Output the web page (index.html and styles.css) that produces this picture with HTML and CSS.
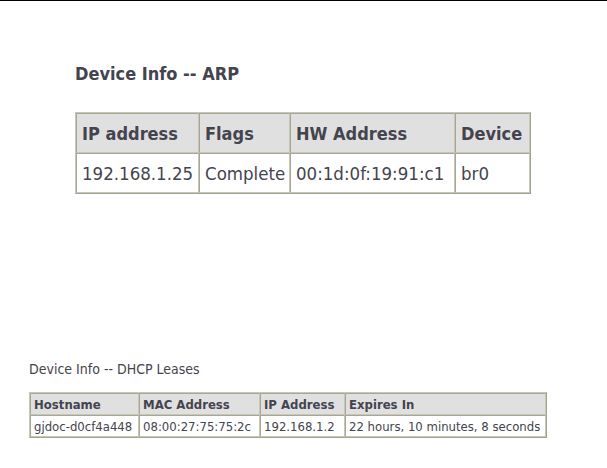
FILE: index.html
```html
<!DOCTYPE html>
<html>
<head>
<meta charset="utf-8">
<link rel="stylesheet" href="styles.css">
</head>
<body>
<div class="topline"></div>
<section class="arp">
  <h1 class="arp-title">Device Info -- ARP</h1>
  <table class="grid grid-big">
    <colgroup>
      <col class="c1"><col class="c2"><col class="c3"><col class="c4">
    </colgroup>
    <tr class="head">
      <td>IP address</td>
      <td>Flags</td>
      <td>HW Address</td>
      <td>Device</td>
    </tr>
    <tr>
      <td>192.168.1.25</td>
      <td>Complete</td>
      <td>00:1d:0f:19:91:c1</td>
      <td>br0</td>
    </tr>
  </table>
</section>
<section class="dhcp">
  <h2 class="dhcp-title">Device Info -- DHCP Leases</h2>
  <table class="grid grid-small">
    <colgroup>
      <col class="d1"><col class="d2"><col class="d3"><col class="d4">
    </colgroup>
    <tr class="head">
      <td>Hostname</td>
      <td>MAC Address</td>
      <td>IP Address</td>
      <td>Expires In</td>
    </tr>
    <tr>
      <td>gjdoc-d0cf4a448</td>
      <td>08:00:27:75:75:2c</td>
      <td>192.168.1.2</td>
      <td>22 hours, 10 minutes, 8 seconds</td>
    </tr>
  </table>
</section>
</body>
</html>
```
FILE: styles.css
```css
html, body {
  margin: 0;
  padding: 0;
  background: #ffffff;
}
body {
  font-family: "DejaVu Sans Condensed", "DejaVu Sans", sans-serif;
  font-stretch: condensed;
  color: #44444e;
}
.topline {
  height: 1px;
  background: #000000;
}
.arp {
  padding: 62px 0 0 75px;
}
.arp-title {
  margin: 0;
  font-size: 18px;
  font-weight: bold;
  line-height: 22px;
  color: #44444e;
}
.grid {
  border-collapse: separate;
  border-spacing: 0;
  table-layout: fixed;
  border: 1px solid #c8c6b4;
  border-right-color: #a4a292;
  border-bottom-color: #a4a292;
}
.grid td {
  border: 1px solid #c8c6b4;
  border-top-color: #a8a696;
  border-left-color: #a8a696;
  white-space: nowrap;
  vertical-align: middle;
  overflow: hidden;
}
.grid .head td {
  background: #e0e0e0;
  font-weight: bold;
}
.grid-big {
  width: 456px;
  margin-top: 27px;
  font-size: 18.5px;
}
.grid-big td {
  height: 38px;
  padding: 0 5px;
}
.grid-big .head td {
  font-size: 18px;
}
.grid-big .c1 { width: 123px; }
.grid-big .c2 { width: 91px; }
.grid-big .c3 { width: 165px; }
.grid-big .c4 { width: 75px; }
.dhcp {
  padding: 167px 0 0 29px;
}
.dhcp-title {
  margin: 0;
  font-size: 14px;
  font-weight: normal;
  line-height: 16px;
  color: #44444e;
}
.grid-small {
  width: 518px;
  margin-top: 15px;
  font-size: 13px;
}
.grid-small td {
  height: 20px;
  padding: 0 3px;
}
.grid-small .d1 { width: 109px; }
.grid-small .d2 { width: 121px; }
.grid-small .d3 { width: 85px; }
.grid-small .d4 { width: 201px; }
```
